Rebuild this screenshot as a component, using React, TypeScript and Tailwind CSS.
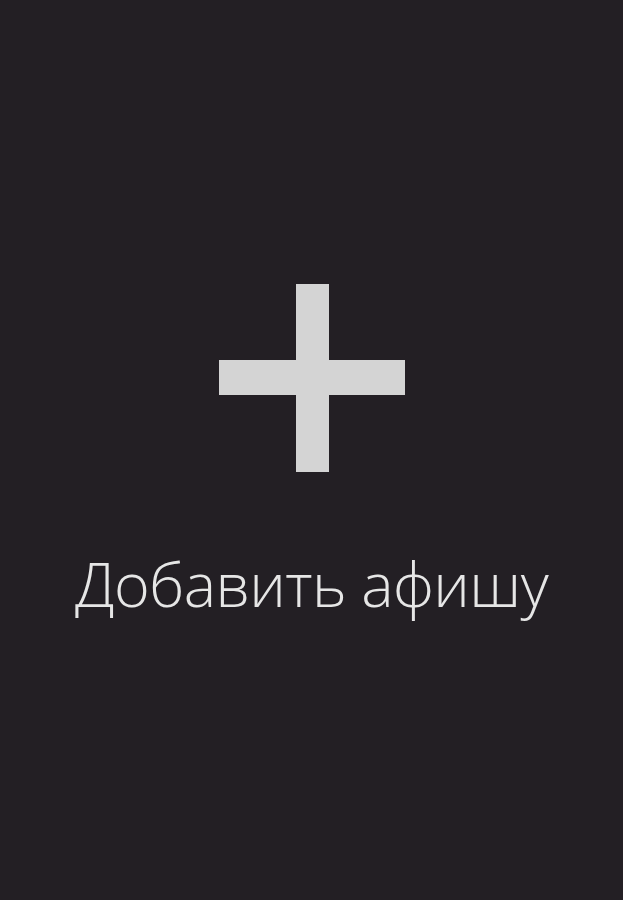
export default function App() {
  return (
    <div className="w-full h-[900px] bg-[#231f24] flex flex-col items-center pt-[284px]">
      <div className="relative w-[186px] h-[188px]">
        <div className="absolute left-[77px] top-0 w-[33px] h-[188px] bg-[#d4d4d4]" />
        <div className="absolute left-0 top-[76px] w-[186px] h-[35px] bg-[#d4d4d4]" />
      </div>
      <div
        className="mt-[81px] text-[61px] leading-none text-[#e6e6e6] font-light tracking-[-0.6px]"
        style={{ fontFamily: '"Open Sans", "Noto Sans", sans-serif' }}
      >
        Добавить афишу
      </div>
    </div>
  );
}
